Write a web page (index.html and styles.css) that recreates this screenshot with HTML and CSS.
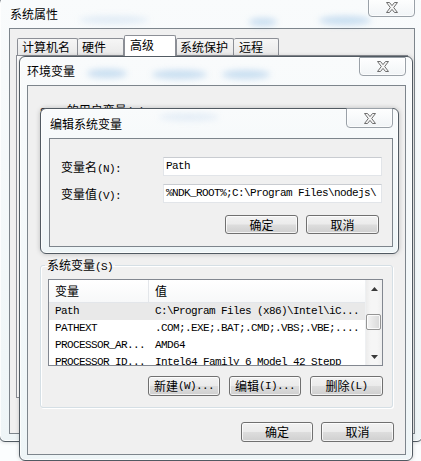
FILE: index.html
```html
<!DOCTYPE html>
<html lang="zh-CN">
<head>
<meta charset="utf-8">
<title>环境变量</title>
<link rel="stylesheet" href="styles.css">
</head>
<body>
<div class="glass-left">
  <span class="blob gl1"></span><span class="blob gl2"></span><span class="blob gl3"></span><span class="blob gl4"></span>
</div>

<div class="win win-sys">
  <div class="titlebar">
    <span class="title">系统属性</span>
    <span class="blob sb1"></span><span class="blob sb2"></span><span class="blob sb3"></span>
  </div>
  <div class="close close-sys"><svg width="14" height="11" viewBox="0 0 14 11"><polygon points="1.5,.5 4.5,.5 7,3.6 9.5,.5 12.5,.5 8.7,5.5 12.5,10.5 9.5,10.5 7,7.4 4.5,10.5 1.5,10.5 5.3,5.5" fill="#f6f6f6" stroke="#6e6e6e"/></svg></div>
  <div class="client sys-client">
    <div class="tabs">
      <div class="tab tab-a">计算机名</div>
      <div class="tab tab-b">硬件</div>
      <div class="tab tab-sel">高级</div>
      <div class="tab tab-c">系统保护</div>
      <div class="tab tab-d">远程</div>
    </div>
    <div class="tabpage"></div>
  </div>
</div>

<div class="win win-env">
  <div class="titlebar">
    <span class="title">环境变量</span>
    <span class="blob eb1"></span><span class="blob eb2"></span><span class="blob eb3"></span>
  </div>
  <div class="close close-env"><svg width="14" height="11" viewBox="0 0 14 11"><polygon points="1.5,.5 4.5,.5 7,3.6 9.5,.5 12.5,.5 8.7,5.5 12.5,10.5 9.5,10.5 7,7.4 4.5,10.5 1.5,10.5 5.3,5.5" fill="#f6f6f6" stroke="#6e6e6e"/></svg></div>
  <div class="client env-client">
    <fieldset class="group group-user">
      <legend><span class="en">SE_0</span> 的用户变量<span class="en">(U)</span></legend>
    </fieldset>
    <fieldset class="group group-sys">
      <legend>系统变量<span class="en">(S)</span></legend>
      <div class="list">
        <div class="list-main">
          <div class="lv-head">
            <div class="c1">变量</div>
            <div class="c2">值</div>
          </div>
          <div class="row row-sel"><div class="c1">Path</div><div class="c2">C:\Program Files (x86)\Intel\iC...</div></div>
          <div class="row"><div class="c1">PATHEXT</div><div class="c2">.COM;.EXE;.BAT;.CMD;.VBS;.VBE;....</div></div>
          <div class="row"><div class="c1">PROCESSOR_AR...</div><div class="c2">AMD64</div></div>
          <div class="row"><div class="c1">PROCESSOR_ID...</div><div class="c2">Intel64 Family 6 Model 42 Stepp</div></div>
        </div>
        <div class="vscroll">
          <div class="arrow"><svg width="7" height="4" viewBox="0 0 7 4"><polygon points="3.5,0 7,4 0,4" fill="#3a3a3a"/></svg></div>
          <div class="track"><div class="thumb"></div></div>
          <div class="arrow"><svg width="7" height="4" viewBox="0 0 7 4"><polygon points="0,0 7,0 3.5,4" fill="#3a3a3a"/></svg></div>
        </div>
      </div>
      <div class="btn-row">
        <div class="btn">新建<span class="en">(W)...</span></div>
        <div class="btn">编辑<span class="en">(I)...</span></div>
        <div class="btn btn-wide">删除<span class="en">(L)</span></div>
      </div>
    </fieldset>
    <div class="footer">
      <div class="btn">确定</div>
      <div class="btn btn-wide">取消</div>
    </div>
  </div>
</div>

<div class="win win-edit">
  <div class="titlebar">
    <span class="title">编辑系统变量</span>
    <span class="blob db1"></span>
  </div>
  <div class="close close-edit"><svg width="14" height="11" viewBox="0 0 14 11"><polygon points="1.5,.5 4.5,.5 7,3.6 9.5,.5 12.5,.5 8.7,5.5 12.5,10.5 9.5,10.5 7,7.4 4.5,10.5 1.5,10.5 5.3,5.5" fill="#f6f6f6" stroke="#6e6e6e"/></svg></div>
  <div class="client edit-client">
    <div class="form">
      <div class="label">变量名<span class="en">(N):</span></div>
      <div class="field mono">Path</div>
      <div class="label">变量值<span class="en">(V):</span></div>
      <div class="field mono">%NDK_ROOT%;C:\Program Files\nodejs\</div>
    </div>
    <div class="edit-buttons">
      <div class="btn btn-wide">确定</div>
      <div class="btn btn-wide">取消</div>
    </div>
  </div>
</div>
</body>
</html>
```

FILE: styles.css
```css
* {
  box-sizing: border-box;
  margin: 0;
  padding: 0;
}

html, body {
  width: 421px;
  height: 461px;
  overflow: hidden;
}

body {
  position: relative;
  background: #fbfdfe;
  font-family: "Noto Sans CJK SC", sans-serif;
  font-size: 12px;
  color: #000;
}

.en, .mono {
  font-family: "Liberation Mono", "Noto Sans CJK SC", monospace;
  font-size: 11px;
  letter-spacing: -0.6px;
}

/* glass decoration */
.blob {
  position: absolute;
  border-radius: 50%;
  background: rgba(80, 150, 215, 0.28);
  filter: blur(3px);
}

.glass-left {
  position: absolute;
  left: 0;
  top: 0;
  width: 9px;
  height: 461px;
}
.gl1 { left: 2px; top: 140px; width: 5px; height: 22px; }
.gl2 { left: 2px; top: 268px; width: 5px; height: 30px; }
.gl3 { left: 2px; top: 330px; width: 5px; height: 26px; }
.gl4 { left: 2px; top: 412px; width: 5px; height: 20px; }

/* windows */
.win {
  position: absolute;
  display: flex;
  flex-direction: column;
  border: 1px solid #515a62;
  border-radius: 6px;
  background: linear-gradient(#f9fbfc, #eef5f7);
  box-shadow: inset 0 0 0 1px rgba(255, 255, 255, 0.75), 0 0 4px rgba(0, 0, 0, 0.18);
}

.titlebar {
  position: relative;
  flex: none;
  display: flex;
  align-items: center;
  white-space: nowrap;
}

.title {
  position: relative;
  z-index: 1;
  font-size: 12px;
  line-height: 16px;
  color: #000;
}

.client {
  flex: 1;
  min-height: 0;
  border: 1px solid #7d858c;
  background: #f0f0f0;
}

.close {
  position: absolute;
  z-index: 2;
  display: flex;
  align-items: center;
  justify-content: center;
  border: 1px solid #9aa1a8;
  border-radius: 1px 1px 4px 4px;
  background: linear-gradient(rgba(255, 255, 255, 0.85), rgba(236, 240, 243, 0.6));
  box-shadow: inset 0 0 0 1px rgba(255, 255, 255, 0.7);
}

/* 系统属性 */
.win-sys {
  left: -1px;
  top: -3px;
  width: 424px;
  height: 445px;
  padding: 0 7px 7px 9px;
}
.win-sys .titlebar {
  height: 30px;
  padding: 2px 0 0 1px;
}
.sb1 { left: 70px; top: 18px; width: 70px; height: 8px; background: rgba(120, 170, 220, 0.18); }
.sb2 { left: 240px; top: 20px; width: 28px; height: 8px; }
.sb3 { left: 310px; top: 18px; width: 52px; height: 9px; }
.close-sys {
  right: 7px;
  top: 0;
  width: 47px;
  height: 19px;
}

.tabs {
  display: flex;
  align-items: flex-end;
  height: 26px;
  padding: 6px 0 0 7px;
}

.tab {
  height: 17px;
  padding-left: 4px;
  border: 1px solid #8c8f96;
  border-bottom: none;
  border-radius: 2px 2px 0 0;
  background: linear-gradient(#f6f6f6, #e9e9e9);
  font-size: 12px;
  line-height: 16px;
  white-space: nowrap;
}
.tab-a { width: 61px; }
.tab-b { width: 46px; border-left: none; }
.tab-c { width: 58px; padding-left: 3px; }
.tab-d { width: 45px; border-left: none; padding-left: 5px; }
.tab-sel {
  position: relative;
  z-index: 1;
  width: 52px;
  height: 21px;
  margin-bottom: -1px;
  padding-left: 5px;
  background: #fff;
  line-height: 18px;
}

.tabpage {
  height: 343px;
  margin: 0 6px 0 6px;
  border: 1px solid #8c8f96;
  background: #fff;
}

/* 环境变量 */
.win-env {
  left: 19px;
  top: 56px;
  width: 394px;
  height: 405px;
  padding: 0 6px 5px 7px;
}
.win-env .titlebar {
  height: 28px;
  padding-top: 0;
}
.eb1 { left: 60px; top: 12px; width: 40px; height: 9px; }
.eb2 { left: 125px; top: 13px; width: 55px; height: 9px; }
.eb3 { left: 195px; top: 13px; width: 48px; height: 9px; }
.close-env {
  right: 6px;
  top: 0;
  width: 47px;
  height: 19px;
}

.env-client {
  padding-top: 17px;
}

.group {
  margin: 0 12px;
  border: 1px solid #d5dfe5;
  border-radius: 3px;
  box-shadow: inset 1px 1px 0 #fff, 1px 1px 0 #fff;
}
.group legend {
  margin-left: -3px;
  padding: 0 2px;
  height: 14px;
  font-size: 12px;
  line-height: 14px;
  white-space: nowrap;
}

.group-user {
  height: 149px;
}

.group-sys {
  margin-top: 6px;
  padding: 7px 9px 11px 7px;
}

.list {
  display: flex;
  height: 87px;
  border: 1px solid #828790;
  background: #fff;
  overflow: hidden;
}

.list-main {
  flex: 1;
  min-width: 0;
  overflow: hidden;
}

.lv-head {
  display: flex;
  height: 23px;
  border-bottom: 1px solid #e3e6ea;
  background: linear-gradient(#ffffff, #f7f8f9);
  font-size: 12px;
  line-height: 22px;
}
.lv-head .c1 {
  border-right: 1px solid #e3e6ea;
}

.c1 {
  flex: none;
  width: 100px;
  padding-left: 6px;
  white-space: nowrap;
  overflow: hidden;
}
.c2 {
  flex: 1;
  padding-left: 6px;
  white-space: nowrap;
  overflow: hidden;
}

.row {
  display: flex;
  height: 17px;
  font-family: "Liberation Mono", monospace;
  font-size: 11px;
  letter-spacing: -0.6px;
  line-height: 17px;
}
.row-sel {
  background: #e9e9e9;
}

.vscroll {
  flex: none;
  display: flex;
  flex-direction: column;
  width: 17px;
  border-left: 1px solid #eef0f2;
  background: linear-gradient(90deg, #ececec, #f6f6f6 30%, #f6f6f6 70%, #eeeeee);
}
.arrow {
  flex: none;
  height: 17px;
  display: flex;
  align-items: center;
  justify-content: center;
}
.track {
  flex: 1;
  padding: 17px 1px 0 0;
}
.thumb {
  height: 16px;
  border: 1px solid #959595;
  border-radius: 2px;
  background: linear-gradient(90deg, #f4f4f4, #e6e6e6 50%, #d9d9d9);
  box-shadow: inset 0 0 0 1px rgba(255, 255, 255, 0.8);
}

.btn-row {
  display: flex;
  justify-content: flex-end;
  gap: 9px;
  margin-top: 10px;
}

.btn {
  display: flex;
  align-items: center;
  justify-content: center;
  width: 72px;
  height: 20px;
  border: 1px solid #707070;
  border-radius: 3px;
  background: linear-gradient(#f2f2f2 0%, #ebebeb 48%, #dddddd 52%, #cfcfcf 100%);
  box-shadow: inset 0 0 0 1px rgba(255, 255, 255, 0.75);
  font-size: 12px;
  line-height: 16px;
  white-space: nowrap;
}
.btn-wide {
  width: 73px;
}

.footer {
  display: flex;
  justify-content: flex-end;
  gap: 8px;
  margin-top: 14px;
  padding-right: 11px;
}

/* 编辑系统变量 */
.win-edit {
  left: 40px;
  top: 108px;
  width: 359px;
  height: 146px;
  padding: 0 5px 6px 8px;
  box-shadow: inset 0 0 0 1px rgba(255, 255, 255, 0.75), 0 0 5px rgba(0, 0, 0, 0.22);
}
.win-edit .titlebar {
  height: 29px;
  padding-left: 1px;
}
.db1 { left: 110px; top: 4px; width: 60px; height: 8px; background: rgba(120, 170, 220, 0.15); }
.close-edit {
  right: 5px;
  top: -1px;
  width: 47px;
  height: 20px;
}

.edit-client {
  padding: 18px 10px 0 11px;
}

.form {
  display: grid;
  grid-template-columns: 102px 219px;
  grid-auto-rows: 19px;
  row-gap: 8px;
}

.label {
  font-size: 12px;
  line-height: 19px;
  white-space: nowrap;
}

.field {
  height: 19px;
  padding-left: 2px;
  border: 1px solid #e2e5e9;
  border-top-color: #c9ccd1;
  background: #fff;
  line-height: 17px;
  white-space: nowrap;
  overflow: hidden;
}

.edit-buttons {
  display: flex;
  justify-content: flex-end;
  gap: 8px;
  margin: 12px 3px 0 0;
}
.edit-buttons .btn {
  height: 19px;
}
```
